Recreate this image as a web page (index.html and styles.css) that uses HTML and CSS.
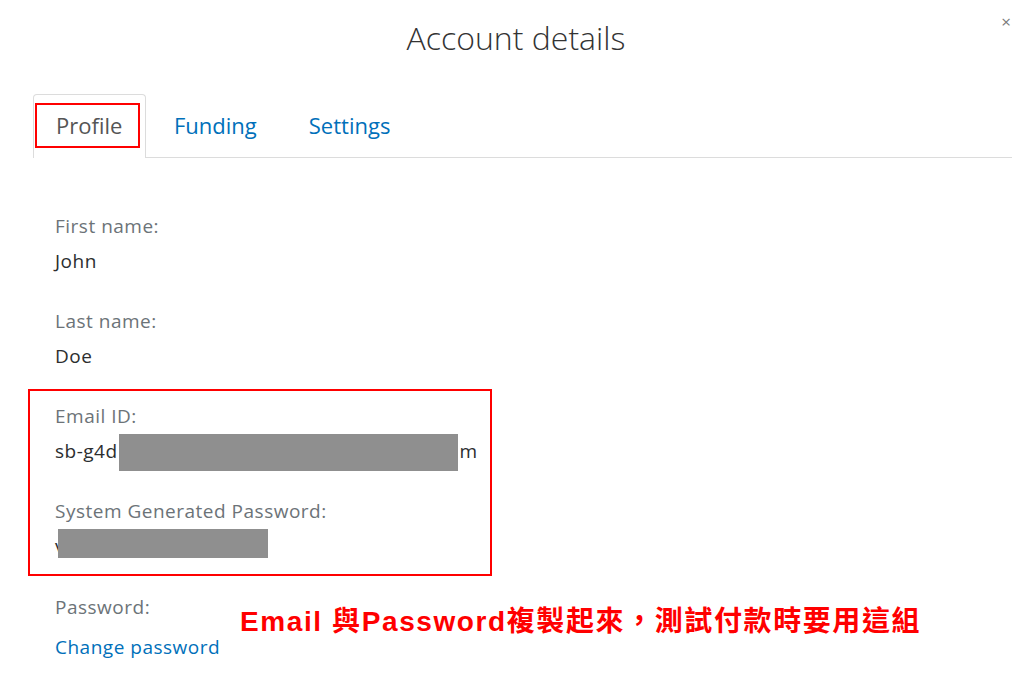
FILE: index.html
```html
<!DOCTYPE html>
<html lang="zh-Hant">
<head>
    <meta charset="UTF-8">
    <meta name="viewport" content="width=device-width, initial-scale=1.0">
    <title>Account details</title>
    <link rel="stylesheet" href="styles.css">
</head>
<body>
    <div class="modal">
        <div class="header">
            <h1 class="title">Account details</h1>
            <span class="close">×</span>
        </div>

        <div class="tabs">
            <div class="tab active"><span class="tab-mark">Profile</span></div>
            <div class="tab">Funding</div>
            <div class="tab">Settings</div>
        </div>

        <div class="content">
            <div class="field">
                <div class="label">First name:</div>
                <div class="value">John</div>
            </div>
            <div class="field">
                <div class="label">Last name:</div>
                <div class="value">Doe</div>
            </div>

            <div class="highlight">
                <div class="field email">
                    <div class="label">Email ID:</div>
                    <div class="value">sb-g4d<span class="redact redact-email"></span>m</div>
                </div>
                <div class="field last">
                    <div class="label">System Generated Password:</div>
                    <div class="value">v<span class="redact redact-pass"></span></div>
                </div>
            </div>

            <div class="field">
                <div class="label">Password:</div>
                <a class="link" href="#">Change password</a>
            </div>

            <div class="note">Email 與Password複製起來，測試付款時要用這組</div>
        </div>
    </div>
</body>
</html>
```

FILE: styles.css
```css
body {
    margin: 0;
    background: #fff;
    font-family: "Open Sans", "Noto Sans", sans-serif;
    color: #2c2e2f;
}

.modal {
    width: 1024px;
    height: 694px;
    position: relative;
    overflow: hidden;
}

.header {
    height: 94px;
    position: relative;
}

.title {
    margin: 0;
    padding-top: 16px;
    padding-left: 8px;
    text-align: center;
    font-size: 32px;
    font-weight: 300;
    line-height: 44px;
    color: #333;
}

.close {
    position: absolute;
    top: 10px;
    right: 13px;
    font-size: 17px;
    color: #7a7a7a;
}

/* tabs */
.tabs {
    display: flex;
    margin: 0 12px 0 33px;
    border-bottom: 1px solid #dcdcdc;
    height: 63px;
}

.tab {
    padding: 0 24px 0 28px;
    font-size: 22px;
    line-height: 63px;
    color: #0070ba;
}

.active {
    width: 113px;
    box-sizing: border-box;
    padding: 0;
    height: 64px;
    border: 1px solid #dcdcdc;
    border-bottom: none;
    border-radius: 4px 4px 0 0;
    background: #fff;
    color: #555;
}

.tab-mark {
    display: block;
    margin: 8px 0 0 1px;
    width: 105px;
    height: 45px;
    box-sizing: border-box;
    border: 2px solid #f00;
    line-height: 41px;
    padding-left: 19px;
}

/* profile fields */
.content {
    padding: 56px 0 0 55px;
}

.field {
    margin-bottom: 36px;
}

.field.email {
    margin-bottom: 34px;
}

.field.last {
    margin-bottom: 0;
}

.label {
    font-size: 19px;
    letter-spacing: 0.5px;
    line-height: 24px;
    color: #6c7378;
    margin-bottom: 11px;
}

.value {
    font-size: 19px;
    letter-spacing: 0.5px;
    line-height: 24px;
    color: #2c2e2f;
}

.highlight {
    margin: -15px 0 19px -27px;
    width: 464px;
    box-sizing: border-box;
    border: 2px solid #f00;
    padding: 13px 0 15px 25px;
}

.redact {
    display: inline-block;
    vertical-align: middle;
    background: #8f8f8f;
    position: relative;
}

.redact-email {
    width: 339px;
    height: 37px;
    margin: -7px 2px -6px 1px;
}

.redact-pass {
    width: 210px;
    height: 29px;
    margin: -4px 0 -3px -7px;
    top: -4px;
}

.link {
    display: block;
    margin-top: 16px;
    font-size: 19px;
    letter-spacing: 0.5px;
    line-height: 24px;
    color: #0070ba;
    text-decoration: none;
}

/* annotation */
.note {
    position: absolute;
    left: 240px;
    top: 599px;
    font-family: "Liberation Sans", "Noto Sans CJK TC", sans-serif;
    font-weight: bold;
    font-size: 28px;
    letter-spacing: 1.6px;
    color: #f00;
}
```
